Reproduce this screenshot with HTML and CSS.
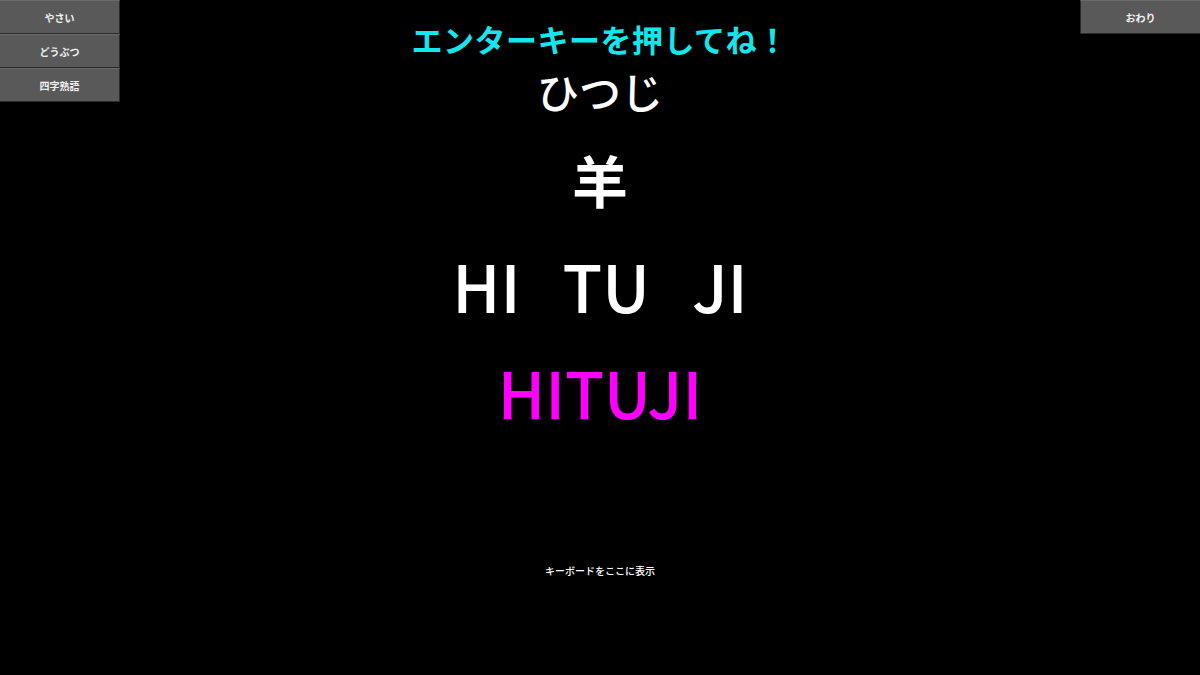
FILE: index.html
```html
<!DOCTYPE html>
<html lang="ja">
<head>
<meta charset="utf-8">
<title>タイピング</title>
<link rel="stylesheet" href="styles.css">
</head>
<body>
<div class="layout">
  <nav class="menu">
    <button class="btn">やさい</button>
    <button class="btn">どうぶつ</button>
    <button class="btn">四字熟語</button>
  </nav>
  <main class="stage">
    <div class="prompt">エンターキーを押してね！</div>
    <div class="kana">ひつじ</div>
    <div class="kanji">羊</div>
    <div class="romaji"><span>HI</span><span>TU</span><span>JI</span></div>
    <div class="typed">HITUJI</div>
    <div class="keyboard">キーボードをここに表示</div>
  </main>
  <div class="side">
    <button class="btn">おわり</button>
  </div>
</div>
</body>
</html>
```
FILE: styles.css
```css
html, body {
  margin: 0;
  padding: 0;
  background: #000;
  width: 1200px;
  height: 675px;
  overflow: hidden;
  font-family: "Noto Sans CJK JP", "Noto Sans", sans-serif;
}
.layout {
  display: grid;
  grid-template-columns: 120px 1fr 120px;
  height: 675px;
}
.menu, .side {
  display: flex;
  flex-direction: column;
}
.btn {
  width: 120px;
  height: 34px;
  margin: 0;
  padding: 0;
  background: #595959;
  color: #f0f0f0;
  border: 1px solid #2a2a2a;
  border-top-color: #6a6a6a;
  font-family: "Noto Sans CJK JP", sans-serif;
  font-size: 10px;
  font-weight: 700;
  box-sizing: border-box;
}
.menu .btn { border-left: none; }
.side .btn { border-right: none; }
.stage {
  display: flex;
  flex-direction: column;
  align-items: center;
  font-weight: 700;
  color: #fff;
}
.prompt {
  margin-top: 19px;
  font-size: 31px;
  line-height: 40px;
  color: #14e6ee;
  letter-spacing: 0.5px;
}
.kana {
  margin-top: 6px;
  font-size: 42px;
  line-height: 52px;
  font-weight: 500;
}
.kanji {
  margin-top: 32px;
  font-size: 56px;
  line-height: 60px;
}
.romaji {
  margin-top: 41px;
  font-size: 65px;
  line-height: 70px;
  font-weight: 500;
  display: flex;
  gap: 42px;
}
.typed {
  margin-top: 35px;
  font-size: 64px;
  line-height: 72px;
  font-weight: 500;
  color: #ff00ff;
}
.keyboard {
  margin-top: 137px;
  font-size: 10px;
  line-height: 14px;
  font-weight: 500;
}
```
